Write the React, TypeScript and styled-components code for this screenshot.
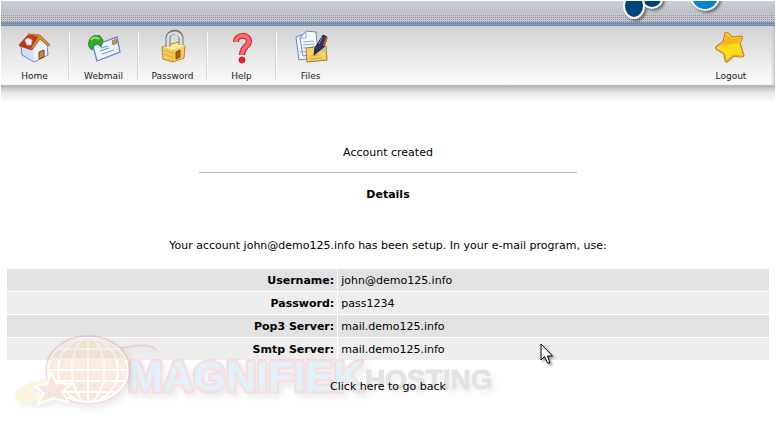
import React from "react";
import styled, { createGlobalStyle } from "styled-components";

const GlobalStyle = createGlobalStyle`
  * { box-sizing: border-box; }
  body {
    margin: 0;
    background: #fff;
    color: #000;
    font: 11px/14px Verdana, "DejaVu Sans", sans-serif;
  }
  a { color: inherit; text-decoration: none; }
`;

const Page = styled.div`
  position: relative;
  overflow: hidden;
  padding: 1px 1px 24px;
`;

const Banner = styled.header`
  position: relative;
  height: 25px;
  border-bottom: 4px solid #7c9cbc;
  background: linear-gradient(#c8d0d4, #b9c0ca 12px, #c4c6ca 13px);
`;

const Dots = styled.div`
  position: absolute;
  left: 0;
  right: 0;
  top: 14px;
  height: 11px;
  background: conic-gradient(from 270deg at 1px 1px, rgba(80, 86, 102, 0.45) 90deg, transparent 0) 0 0 / 2px 2px;
`;

const Bubbles = styled.svg`
  position: absolute;
  right: 34px;
  top: 0;
  width: 120px;
  height: 22px;
`;

const Toolbar = styled.nav`
  display: flex;
  height: 59px;
  background: linear-gradient(#d2d2d2, #fcfcfc);
  box-shadow: inset -3px 0 3px -1px #c4c4c4;
`;

const ToolSlot = styled.div<{ $last?: boolean }>`
  display: flex;
  width: 69px;
  padding-top: 6px;
  background: ${(p) =>
    p.$last
      ? "none"
      : "linear-gradient(90deg, #d4d4d4 1px, #fafafa 1px) right 6px / 2px 47px no-repeat"};
`;

const ToolLink = styled.a`
  display: flex;
  flex: 1;
  flex-direction: column;
  align-items: center;
  height: 50px;
  padding-right: 2px;
  color: #222;
  font: 9px/12px "DejaVu Sans", Verdana, sans-serif;
`;

const Icon = styled.svg`
  flex: none;
  width: 36px;
  height: 36px;
  margin-top: -4px;
  margin-bottom: 6px;
  overflow: visible;
`;

const Spacer = styled.div`
  flex: 1;
`;

const LogoutSlot = styled.div`
  display: flex;
  width: 86px;
  padding-top: 6px;
`;

const Shadow = styled.div`
  height: 17px;
  background: linear-gradient(#b7b7b7 0 2px, #c6c6c6 3px, #e6e6e6 8px, #fff);
`;

const Content = styled.main`
  padding: 44px 6px 0;
  text-align: center;
`;

const Intro = styled.section`
  padding: 0 3px;
`;

const Line = styled.p`
  margin: 0;
`;

const Rule = styled.hr`
  width: 50%;
  height: 1px;
  margin: 12px auto 15px;
  border: 0;
  background: #b9b9b9;
`;

const Heading = styled.h1`
  margin: 0 0 37px;
  font-size: 11px;
  line-height: 14px;
`;

const DetailsTable = styled.table`
  width: 100%;
  margin: 16px 0 20px;
  border-collapse: collapse;
  table-layout: fixed;
`;

const Row = styled.tr`
  background: #e2e2e2;
  &:nth-child(even) { background: #ededed; }
  & + & { border-top: 1px solid #fff; }
`;

const Label = styled.th`
  width: 43.4%;
  padding: 5px 3px 3px;
  border-right: 1px solid #fff;
  text-align: right;
`;

const Value = styled.td`
  padding: 5px 3px 3px;
  text-align: left;
`;

const Above = styled.span`
  position: relative;
  z-index: 2;
`;

const Watermark = styled.svg`
  position: absolute;
  z-index: 1;
  left: 10px;
  top: 329px;
  width: 490px;
  height: 85px;
  pointer-events: none;
`;

const Pointer = styled.svg`
  position: absolute;
  z-index: 3;
  left: 540px;
  top: 343px;
  width: 14px;
  height: 23px;
  pointer-events: none;
  filter: drop-shadow(2px 2px 1px #0005);
`;

const HomeIcon = () => (
  <Icon viewBox="0 0 36 36" aria-hidden="true">
    <path d="M4 18 5 27 17 34 31 27 30 17 22 9 10 10Z" fill="#cfe0fc" stroke="#7186be" />
    <path d="M16 22 24 12 30 18 30 27 17 33Z" fill="#eaf2ff" />
    <path d="M22 24 27 22V29L22 31Z" fill="#cf8534" stroke="#7c451b" />
    <path d="M2 17 11 7 23 8 15 22 3 18Z" fill="#c73516" stroke="#a64a1c" />
    <path d="M11 6 23 7 33 17 31 18 23 11 15 22 14 20 21 9Z" fill="#e08a2c" stroke="#a65d22" strokeWidth=".8" />
    <path d="M8 12 11 10 15 12 14 17 10 17Z" fill="#f1f7ff" stroke="#aebbd9" />
  </Icon>
);

const MailIcon = () => (
  <Icon viewBox="0 0 36 36" aria-hidden="true">
    <path d="M7 18 31 9 34 24 11 33Z" fill="#eaf2ff" stroke="#6981c5" strokeWidth="1.3" />
    <path d="M14 23 23 20M16 26 28 22M15 20 22 18" stroke="#7791cf" />
    <path d="M26 13 30 11 31 15 27 17Z" fill="#d99238" stroke="#77634c" strokeWidth=".7" />
    <path d="M3 14C4 8 9 7 12 8L13 7 17 12 15 19 12 16C8 15 8 18 6 22 3 20 2 17 3 14Z" fill="#35ad27" stroke="#16831d" />
    <path d="M5 12C7 9 10 9 13 11" stroke="#8cea73" strokeWidth="2" fill="none" />
  </Icon>
);

const LockIcon = () => (
  <Icon viewBox="0 0 36 36" aria-hidden="true">
    <path d="M7 19 23 14 30 18 29 30 18 34 8 31Z" fill="#f6cd57" stroke="#b8862d" />
    <path d="M8 19 18 22 30 18 23 15Z" fill="#ffec9b" />
    <path d="M9 22 17 25M9 26 17 29M18 23V33" stroke="#e4aa38" />
    <path d="M13 19V10C13 3 25 2 26 9V17" fill="none" stroke="#777" strokeWidth="5" />
    <path d="M13 19V10C13 4 24 3 26 10V17" fill="none" stroke="#ddd" strokeWidth="3" />
    <path d="M21 24 25 22V29L21 31Z" fill="#a46120" stroke="#824b18" />
  </Icon>
);

const HelpIcon = () => (
  <Icon viewBox="0 0 36 36" aria-hidden="true">
    <path d="M12 14C12 6 25 6 25 13 25 19 18 18 18 27" fill="none" stroke="#bd2638" strokeWidth="6" />
    <path d="M12 14C12 6 25 6 25 13 25 19 18 18 18 27" fill="none" stroke="#ff686b" strokeWidth="4" />
    <circle cx="18" cy="32" r="3" fill="#f51f2a" stroke="#c61927" />
  </Icon>
);

const FilesIcon = () => (
  <Icon viewBox="0 0 36 36" aria-hidden="true">
    <path d="M3 9 9 7 20 7 21 30 6 32Z" fill="#edf4ff" stroke="#6785cb" />
    <path d="M7 10 13 3 23 4 25 26 10 28Z" fill="#f8fbff" stroke="#6785cb" />
    <path d="M8 10 13 10 13 3M10 14 21 13M10 17 22 16M10 20 21 19M7 24 15 23" fill="none" stroke="#8daae2" />
    <path d="M13 20 33 18 34 32 14 34Z" fill="#f7cf67" stroke="#a8792b" />
    <path d="M17 28 26 27M17 31 29 30" stroke="#d5a74c" />
    <path d="M29 20H32V24H29Z" fill="#a7d1a6" />
    <path d="M21 27 22 20 30 7 34 9 31 19Z" fill="#343259" stroke="#20213f" />
    <path d="M34 9 31 18" stroke="#e55934" strokeWidth="2" />
    <path d="M26 16 29 9" stroke="#7d86ab" />
  </Icon>
);

const StarIcon = () => (
  <Icon viewBox="0 0 36 36" aria-hidden="true">
    <path d="M12 5Q15 3 19 9L28 8Q31 8 27 15L31 28Q30 30 21 28L14 34Q12 35 11 26L3 21Q1 19 10 14Z" fill="#ffdc19" stroke="#b98036" strokeWidth="1.2" strokeLinejoin="round" />
    <path d="M13 6 19 11 28 9 25 15 17 16 5 19 11 15Z" fill="#fbb31c" />
    <path d="M12 26 13 33 20 27 30 28" fill="none" stroke="#f6a719" />
  </Icon>
);

const tools = [
  { name: "Home", Drawing: HomeIcon },
  { name: "Webmail", Drawing: MailIcon },
  { name: "Password", Drawing: LockIcon },
  { name: "Help", Drawing: HelpIcon },
  { name: "Files", Drawing: FilesIcon },
];

const details = [
  ["Username:", "john@demo125.info"],
  ["Password:", "pass1234"],
  ["Pop3 Server:", "mail.demo125.info"],
  ["Smtp Server:", "mail.demo125.info"],
];

const HostingWatermark = () => (
  <Watermark viewBox="0 0 490 85" aria-label="Magnifiek Hosting">
    <defs>
      <linearGradient id="globe" x2="0" y2="1">
        <stop stopColor="#efb52b" />
        <stop offset="1" stopColor="#e04b20" />
      </linearGradient>
      <filter id="soft" x="-10%" y="-20%" width="120%" height="150%">
        <feDropShadow dx="3" dy="4" stdDeviation="3" floodColor="#000" floodOpacity=".5" />
      </filter>
    </defs>
    <g opacity=".15" filter="url(#soft)">
      <path d="M39 48C-5 58-8 79 38 73L34 66C16 70 17 57 41 54Z" fill="#f3b72c" />
      <ellipse cx="78" cy="41" rx="42" ry="34" fill="#fff" stroke="#c82432" strokeWidth="2" />
      <ellipse cx="78" cy="41" rx="39" ry="31" fill="url(#globe)" />
      <g fill="none" stroke="#fff" strokeWidth="2">
        <path d="M78 9V73M47 20H110M40 30H116M38 41H118M40 52H116M48 63H108" />
        <ellipse cx="78" cy="41" rx="16" ry="32" />
        <ellipse cx="78" cy="41" rx="30" ry="32" />
      </g>
      <path d="M41 44 46 54 62 55 52 62 58 73 43 69 28 75 34 64 25 57 37 55Z" fill="#dc482b" stroke="#fff" strokeWidth="2" />
    </g>
    <g opacity=".15" filter="url(#soft)" fontFamily="'Liberation Sans', sans-serif" fontWeight="700">
      <path d="M111 19Q140 13 146 21" fill="none" stroke="#c82432" strokeWidth="2" />
      <text x="118" y="62" fontSize="42" fill="#38a8f0" stroke="#c82432" strokeWidth="5" strokeLinejoin="round" paintOrder="stroke">MAGNIFIEK</text>
      <text x="355" y="60" fontSize="28" fill="#444" stroke="#444">HOSTING</text>
    </g>
  </Watermark>
);

export default function App() {
  return (
    <Page>
      <GlobalStyle />
      <Banner>
        <Dots />
        <Bubbles viewBox="0 0 120 22" aria-hidden="true">
          <g stroke="#f8f8f8" strokeWidth="2" filter="drop-shadow(2px 2px 1px #0006)">
            <ellipse cx="31" cy="-2" rx="10" ry="9" fill="#00437a" />
            <ellipse cx="13" cy="5" rx="10" ry="12" fill="#00437a" />
            <circle cx="84" cy="-5" r="14" fill="#0784cd" />
          </g>
        </Bubbles>
      </Banner>
      <Toolbar>
        {tools.map(({ name, Drawing }, i) => (
          <ToolSlot key={name} $last={i === tools.length - 1}>
            <ToolLink href="#"><Drawing />{name}</ToolLink>
          </ToolSlot>
        ))}
        <Spacer />
        <LogoutSlot>
          <ToolLink href="#"><StarIcon />Logout</ToolLink>
        </LogoutSlot>
      </Toolbar>
      <Shadow />
      <Content>
        <Intro>
          <Line>Account created</Line>
          <Rule />
          <Heading>Details</Heading>
          <Line>Your account john@demo125.info has been setup. In your e-mail program, use:</Line>
        </Intro>
        <DetailsTable>
          <tbody>
            {details.map(([label, value]) => (
              <Row key={label}>
                <Label scope="row"><Above>{label}</Above></Label>
                <Value><Above>{value}</Above></Value>
              </Row>
            ))}
          </tbody>
        </DetailsTable>
        <Above as="a" href="#">Click here to go back</Above>
      </Content>
      <HostingWatermark />
      <Pointer viewBox="0 0 14 23" aria-hidden="true">
        <path d="M1 1V17L4.500 13.500 7.500 20H10L7.500 13H12.500Z" fill="#fff" stroke="#000" />
      </Pointer>
    </Page>
  );
}
